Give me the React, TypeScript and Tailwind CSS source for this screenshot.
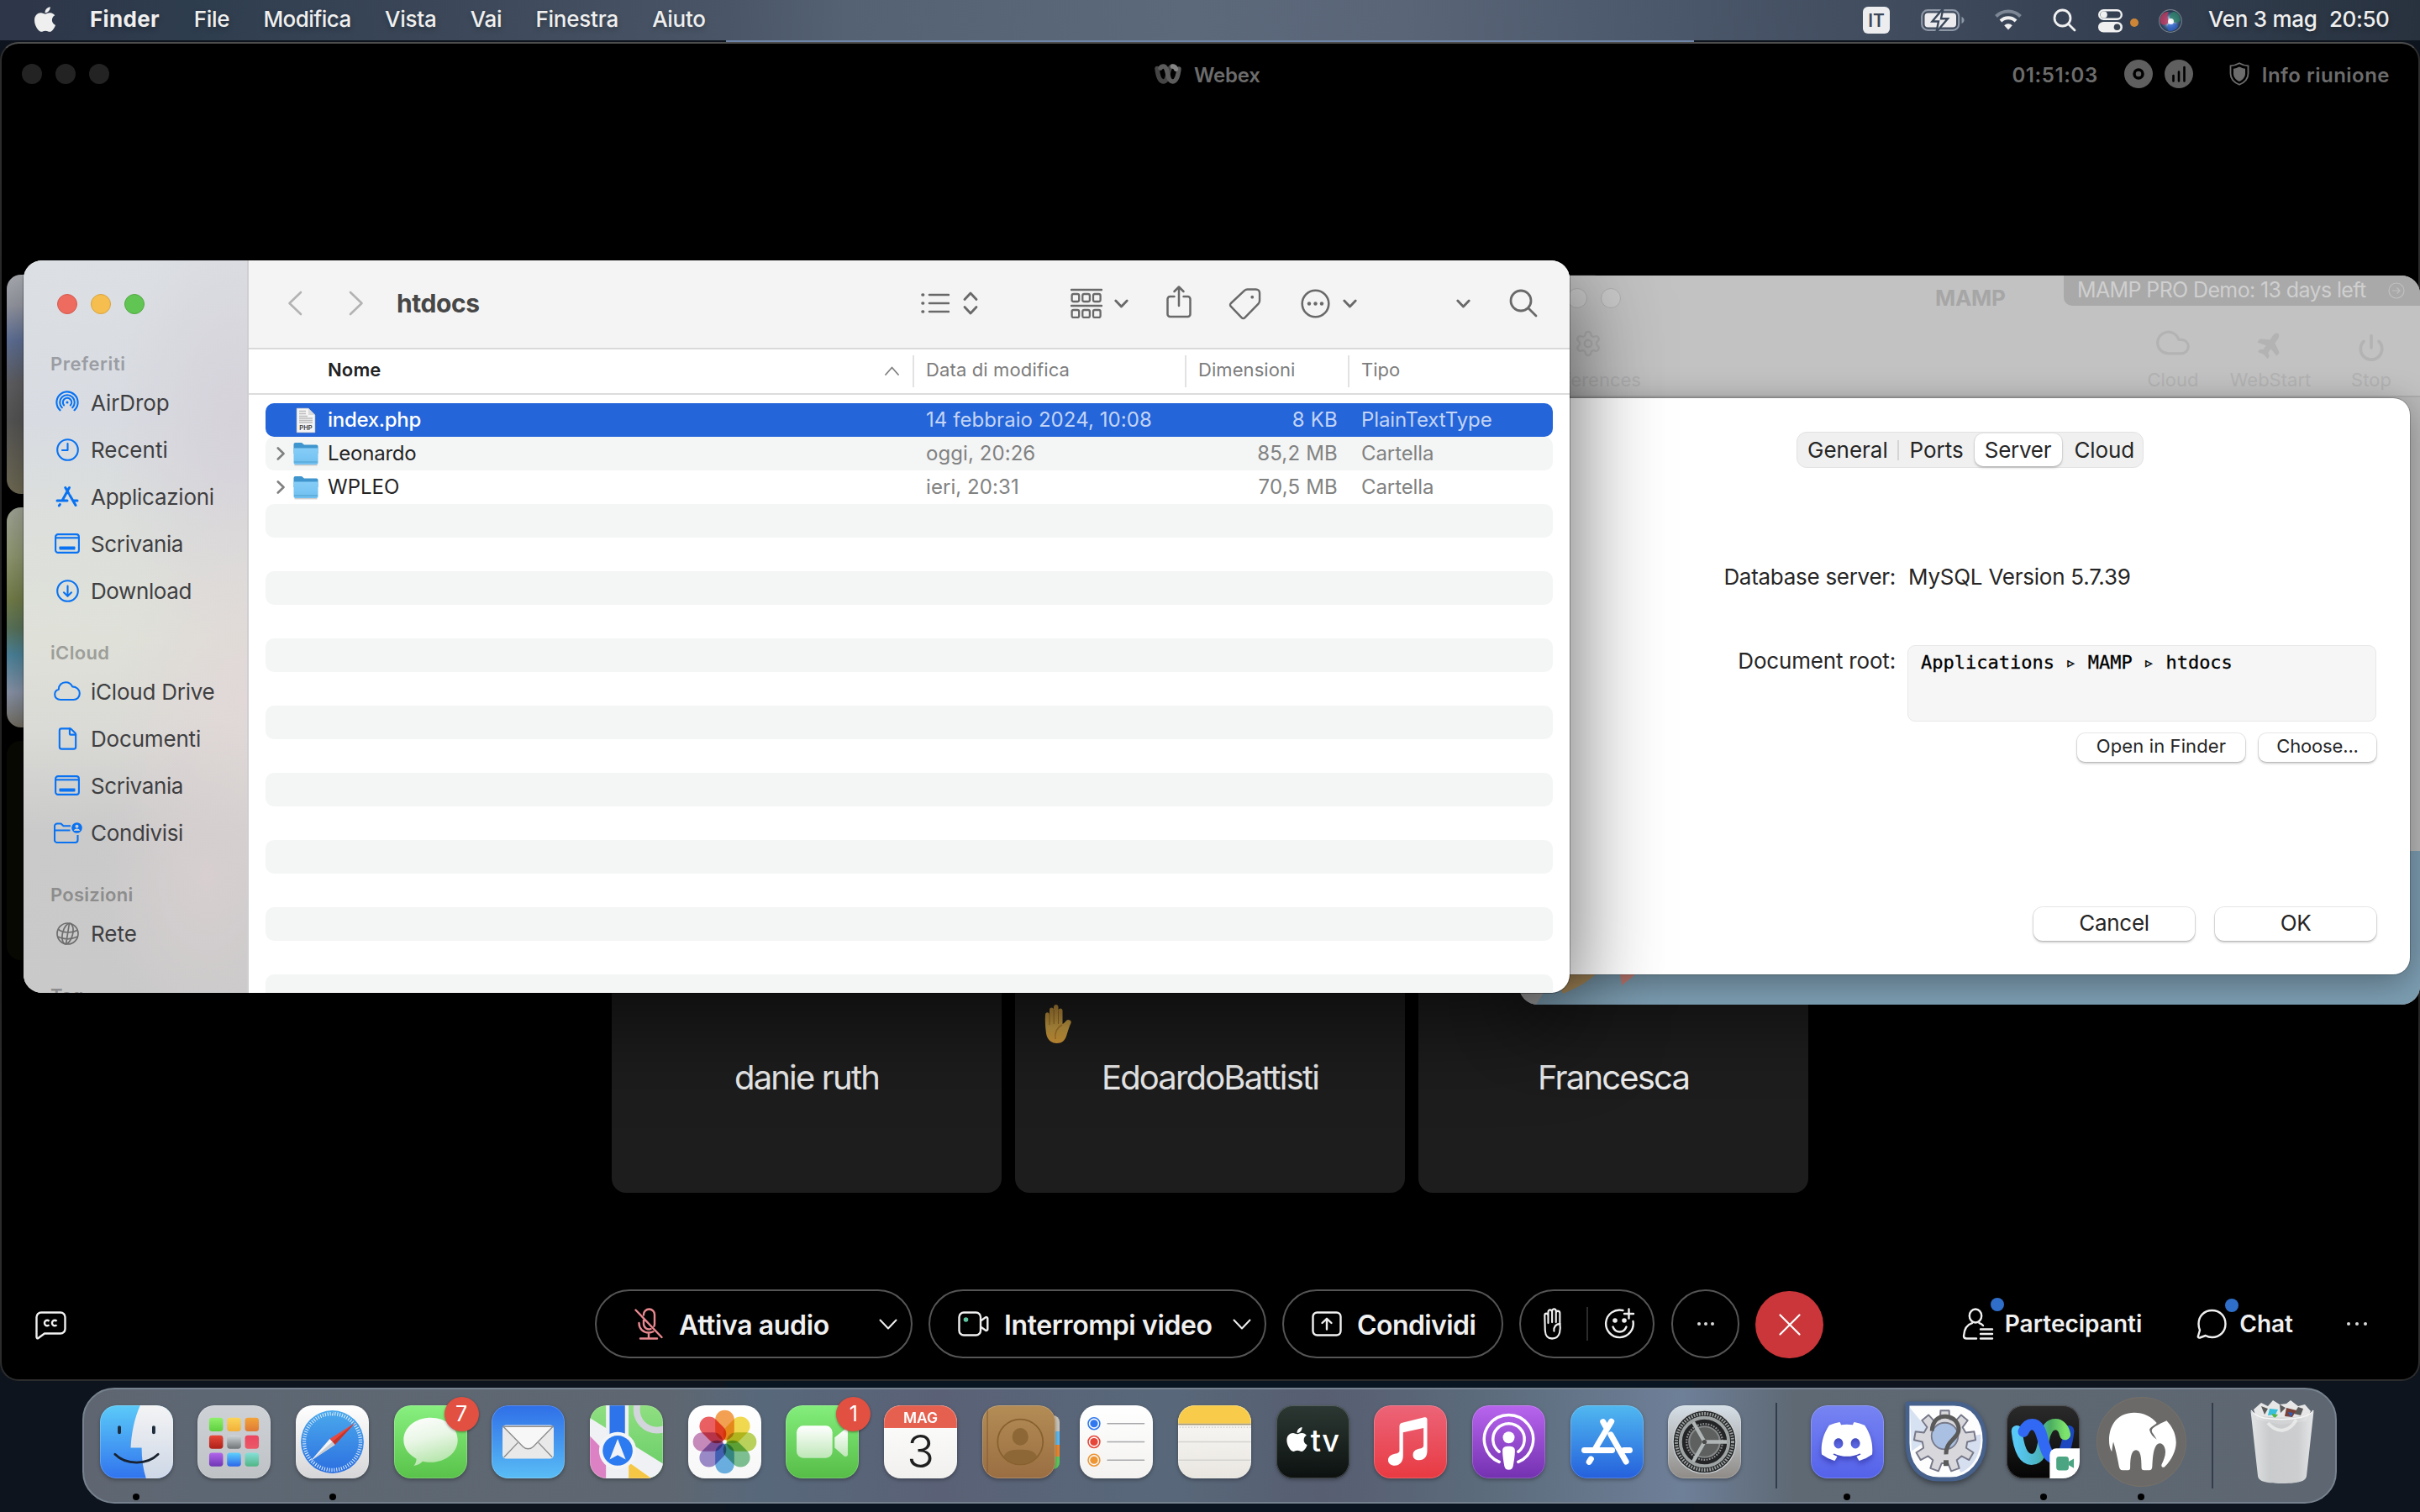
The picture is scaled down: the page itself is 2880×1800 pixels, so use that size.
import type { ReactNode } from 'react';
import { FaApple, FaDiscord, FaPlane } from 'react-icons/fa6';
import { Cloud, File, Power, Settings } from 'lucide-react';

/* ---------- helpers ---------- */

function gearPath(cx: number, cy: number, teeth: number, outer: number, inner: number) {
  const pts: string[] = [];
  const step = (Math.PI * 2) / teeth;
  for (let i = 0; i < teeth; i++) {
    const a = i * step - Math.PI / 2;
    const at = (r: number, o: number) =>
      `${(cx + r * Math.cos(a + o * step)).toFixed(2)} ${(cy + r * Math.sin(a + o * step)).toFixed(2)}`;
    pts.push(at(inner, -0.3), at(outer, -0.2), at(outer, 0.2), at(inner, 0.3));
  }
  return `M${pts.join('L')}Z`;
}

/* ---------- menu bar ---------- */

const menus: [string, string][] = [
  ['File', 'w-[41px] tracking-[-0.012em]'],
  ['Modifica', 'w-[103px] tracking-[-0.02em]'],
  ['Vista', 'w-[60px] tracking-[-0.01em]'],
  ['Vai', 'w-[36px] tracking-[-0.011em]'],
  ['Finestra', 'w-[97px] tracking-[-0.009em]'],
  ['Aiuto', 'w-[62px] tracking-[-0.012em]'],
];

function MenuBar() {
  return (
    <header className="flex h-[48px] w-full items-center bg-[linear-gradient(90deg,#2e3649_0%,#2e3d4e_8%,#3a4657_17%,#4a5667_30%,#556274_35%,#5c697b_49%,#5a6578_58%,#4d596c_67%,#414d5f_78%,#333f51_88%,#28323f_100%)] pb-[3px] pl-[39px] pr-[37px] text-[26px] font-medium leading-none whitespace-nowrap text-[#efefef] [text-shadow:0_3px_6px_rgba(0,0,0,0.3)]">
      <FaApple className="mr-[39px] h-[34px] w-[29px]" />
      <div className="flex gap-[41.7px]">
        <span className="w-[82px] font-bold tracking-[0.012em]">Finder</span>
        {menus.map(([m, c]) => (
          <span key={m} className={c}>{m}</span>
        ))}
      </div>
      <div className="ml-auto flex items-center">
        <span className="mt-[3px] flex h-[32px] w-[32px] items-center justify-center rounded-[6px] bg-[#ededf0] text-[21px] font-semibold text-[#3c4757] [text-shadow:none]">IT</span>
        <svg className="ml-[37px] mt-[3px] h-[26px] w-[52px]" viewBox="0 0 52 26" fill="none">
          <rect x="1.2" y="1.2" width="44" height="23.6" rx="7" stroke="#8d97a5" strokeWidth="2.2" />
          <rect x="4.5" y="4.5" width="37.5" height="17" rx="4" fill="#ececee" />
          <path d="M48.500 9v8c2-.8 3-2.300 3-4s-1-3.200-3-4z" fill="#8d97a5" />
          <path d="M26.500-1 13.500 14.500h7.500L18.500 27 32 11.300h-8z" fill="#ececee" stroke="#3b4859" strokeWidth="2.400" />
        </svg>
        <svg className="ml-[35px] h-[26px] w-[34px]" viewBox="0 0 34 26" fill="none" strokeWidth="4">
          <path d="M2.500 9.500a20.500 20.500 0 0 1 29 0" stroke="#7c8694" />
          <path d="M8 15a12.800 12.800 0 0 1 18 0" stroke="#f0f0f0" />
          <path d="M17 25.500l-4.800-5.200a6.800 6.800 0 0 1 9.600 0z" fill="#f0f0f0" />
        </svg>
        <svg className="ml-[36px] mt-[3px] h-[28px] w-[28px]" viewBox="0 0 28 28" fill="none" stroke="#f0f0f0" strokeWidth="2.800" strokeLinecap="round">
          <circle cx="11.500" cy="11.500" r="9.500" />
          <path d="M18.500 18.500 26 26" />
        </svg>
        <svg className="ml-[26px] mt-[4px] h-[28px] w-[29px]" viewBox="0 0 29 28" fill="none">
          <rect x="1.200" y="1.200" width="26.600" height="10.600" rx="5.300" stroke="#f0f0f0" strokeWidth="2.400" />
          <circle cx="6.800" cy="6.500" r="4" fill="#f0f0f0" />
          <rect x="0" y="15" width="29" height="12.500" rx="6.250" fill="#f0f0f0" />
          <circle cx="22.500" cy="21.300" r="3.800" fill="#36424f" />
        </svg>
        <span className="ml-[9px] mt-[8px] h-[10px] w-[10px] rounded-full bg-[#cf8536]" />
        <svg className="ml-[24px] mt-[4px] h-[28px] w-[28px]" viewBox="0 0 28 28">
          <defs>
            <radialGradient id="siri" cx="0.5" cy="0.52" r="0.5">
              <stop offset="0" stopColor="#ffffff" />
              <stop offset="0.22" stopColor="#b9d3ea" />
              <stop offset="0.6" stopColor="#46678f" />
              <stop offset="1" stopColor="#1c2c3f" />
            </radialGradient>
          </defs>
          <circle cx="14" cy="14" r="13.300" fill="url(#siri)" stroke="#77808c" strokeWidth="1.200" />
          <path d="M2.500 17C0 9 5 3 12 3c-3 5-1 9 1 11-3 5-7 6-10.500 3z" fill="#b93a5e" opacity=".85" />
          <path d="M14 13C12 8 14 3 19 3c5 2 7 7 6.500 11-4 3-8 2-11.500-1z" fill="#2f7f68" opacity=".85" />
          <path d="M13 16c4-1 8 1 10 4-2 4-6 6-11 6-3-3-2-7 1-10z" fill="#2f63d0" opacity=".7" />
          <circle cx="14.500" cy="14.500" r="3.500" fill="#fff" opacity=".9" />
        </svg>
        <span className="ml-[31px] w-[130px] tracking-[-0.011em]">Ven 3 mag</span>
        <span className="ml-[14px] w-[71px] tracking-[-0.016em]">20:50</span>
      </div>
    </header>
  );
}

/* ---------- Webex ---------- */

function WebexGlyph() {
  return (
    <svg className="h-[24px] w-[32px]" viewBox="0 0 32 24" fill="none" strokeLinecap="round" strokeWidth="5.500">
      <path d="M3 5.500C4 15 6 21 10.500 21S15.500 14 16.500 10 19 3 21.500 3" stroke="#454545" />
      <path d="M7 5C8 3.500 9 3 10.500 3 14 3 15 9 16 13.500S19 21 21.500 21C26 21 28 15 29 6" stroke="#5c5c5c" />
      <path d="M21.500 3c2 0 3.300 1.200 4 3.200" stroke="#858585" />
    </svg>
  );
}

function Tile({ name, className = 'bg-[#1d1d1d]', hand }: { name?: string; className?: string; hand?: boolean }) {
  return (
    <div className={`relative flex h-[261.250px] w-[464px] items-center justify-center rounded-[17px] pb-[12px] text-[40px] leading-none text-[#ececec] tracking-[-0.046em] ${className}`}>
      {name}
      {hand && (
        <svg className="absolute left-[34px] top-[37px] h-[47px] w-[36px]" viewBox="0 0 36 47">
          <defs>
            <linearGradient id="palm" x1="0" y1="0" x2="0" y2="1">
              <stop offset="0" stopColor="#b98a3a" />
              <stop offset=".6" stopColor="#d1a647" />
              <stop offset="1" stopColor="#d99c38" />
            </linearGradient>
          </defs>
          <path d="M2 12c0-3 4-4 5 0l0 10V6c0-3.500 5-3.500 5 0V3c0-4 5.500-4 5.500 0v4c0-3.500 5-3.500 5 0v16c3-1 4-5 6.500-5s4.500 1.500 3.500 4c-2 4-3 8-5 14-2 7-6 10-12 10S4 42 3 34 1.500 20 2 12z" fill="url(#palm)" />
          <path d="M7 10v14M12.200 6v17M17.600 7v16" stroke="#946a2a" strokeWidth="1" />
          <path d="M22 24c-6 3-9 9-8 17" stroke="#b17c2d" strokeWidth="1.500" fill="none" />
        </svg>
      )}
    </div>
  );
}

const hiddenTile = 'bg-[#1d1d1d]';
const leftTiles = [
  'bg-[linear-gradient(180deg,#b4b7bd_0%,#a7a9b4_14%,#7186b4_30%,#767578_50%,#6a6a6a_66%,#8a8468_100%)]',
  'bg-[linear-gradient(180deg,#c7cdbb_0%,#b3bd8d_22%,#8f9c5a_42%,#6f8f70_55%,#5da3c0_67%,#a9b6cf_84%,#8e8878_100%)]',
  'bg-[#0b0b05]',
];

function Chevron() {
  return (
    <svg className="h-[13px] w-[22px]" viewBox="0 0 22 13" fill="none" stroke="#f0f0f0" strokeWidth="2" strokeLinecap="round" strokeLinejoin="round">
      <path d="M1.500 1.500 11 11.500l9.500-10" />
    </svg>
  );
}

function Dots({ className }: { className: string }) {
  return (
    <span className={`flex ${className}`}>
      <i className="h-[4px] w-[4px] rounded-full bg-[#d8d8d8]" />
      <i className="h-[4px] w-[4px] rounded-full bg-[#d8d8d8]" />
      <i className="h-[4px] w-[4px] rounded-full bg-[#d8d8d8]" />
    </span>
  );
}

const pill = 'flex h-[82px] items-center rounded-full border-2 border-[#555] shrink-0';

function WebexWindow() {
  return (
    <section className="absolute left-0 top-[50px] flex h-[1594px] w-[2880px] flex-col overflow-hidden rounded-[22px] border-2 border-[#2c2c2c] border-t-[#4d4d4d] bg-black">
      <div className="flex h-[72px] shrink-0 items-center px-[24px] text-[24px] font-semibold leading-none text-[#6c6c6c]">
        <div className="flex w-[1348px] gap-[16px]">
          <i className="h-[24px] w-[24px] rounded-full bg-[#232323]" />
          <i className="h-[24px] w-[24px] rounded-full bg-[#232323]" />
          <i className="h-[24px] w-[24px] rounded-full bg-[#232323]" />
        </div>
        <WebexGlyph />
        <span className="ml-[15px] mt-[4px] tracking-[-0.01em]">Webex</span>
        <div className="ml-auto mr-[10px] flex items-center">
          <span className="mt-[4px] tracking-[0.025em]">01:51:03</span>
          <svg className="ml-[31px] h-[34px] w-[34px]" viewBox="0 0 34 34">
            <circle cx="17" cy="17" r="17" fill="#5f5f5f" />
            <circle cx="17" cy="17" r="5" fill="none" stroke="#000" strokeWidth="3.500" />
          </svg>
          <svg className="ml-[14px] h-[34px] w-[34px]" viewBox="0 0 34 34">
            <circle cx="17" cy="17" r="17" fill="#5f5f5f" />
            <path d="M10.500 19v6.500M17 14.500v11M23.500 9v16.500" stroke="#000" strokeWidth="2.600" strokeLinecap="round" />
          </svg>
          <svg className="ml-[43px] h-[28px] w-[24px]" viewBox="0 0 24 28">
            <path d="M12 1.200c3.500 2 6.500 2.800 10.500 3.200v9c0 6-4 10.500-10.500 13.400C5.500 23.900 1.500 19.400 1.500 13.400v-9C5.500 4 8.500 3.200 12 1.200z" fill="none" stroke="#6c6c6c" strokeWidth="1.800" />
            <path d="M12 5.500c2.500 1.300 4.500 1.900 7 2.200v6c0 4-2.600 7-7 9.300-4.400-2.300-7-5.300-7-9.300v-6c2.500-.3 4.500-.9 7-2.200z" fill="#6c6c6c" />
          </svg>
          <span className="ml-[15px] mt-[4px] tracking-[0.02em]">Info riunione</span>
        </div>
      </div>

      <div className="mt-[203px] flex shrink-0 flex-col gap-[16px]">
        {leftTiles.map((bg) => (
          <div key={bg} className="flex gap-[16px] pl-[6px]">
            <Tile className={bg} />
            <Tile className={hiddenTile} />
            <Tile className={hiddenTile} />
            <Tile className={hiddenTile} />
          </div>
        ))}
        <div className="flex justify-center gap-[16px]">
          <Tile name="danie ruth" />
          <Tile name="EdoardoBattisti" hand />
          <Tile name="Francesca" />
        </div>
      </div>

      <div className="mt-[115px] grid shrink-0 grid-cols-[1fr_auto_1fr] items-center leading-none text-[#f0f0f0]">
        <svg className="ml-[39px] mt-[3px] h-[34px] w-[39px]" viewBox="0 0 39 34" fill="none" stroke="#f0f0f0" strokeWidth="2.400">
          <path d="M8 1.500h23a5.500 5.500 0 0 1 5.500 5.500v14a5.500 5.500 0 0 1-5.500 5.500H12l-7.500 5.500c-1 .7-2 0-2-1.200V7A5.500 5.500 0 0 1 8 1.500z" strokeLinejoin="round" />
          <path d="M17.500 11.800a3.200 3.200 0 1 0 0 4.400M26.500 11.800a3.200 3.200 0 1 0 0 4.400" />
        </svg>

        <div className="mr-[2px] flex items-center gap-[19px] text-[32px] font-semibold whitespace-nowrap">
          <div className={`${pill} w-[378px] pl-[45px] pr-[16px]`}>
            <svg className="h-[38px] w-[34px] shrink-0" viewBox="0 0 34 38" fill="none" stroke="#e9888f" strokeWidth="2.400" strokeLinecap="round">
              <path d="M1.500 2.500 32.500 35M11 8.500V8a6.500 6.500 0 0 1 13 0v11c0 1-.2 2-.6 2.800M11 14v5a6.500 6.500 0 0 0 8.500 6.200M5.500 18c0 7 5 11.500 11.500 11.500 2 0 3.800-.4 5.300-1.200M17 29.500V36M7 36.500h20" />
            </svg>
            <span className="ml-[19px] mt-[3px] tracking-[-0.0115em]">Attiva audio</span>
            <span className="ml-auto"><Chevron /></span>
          </div>
          <div className={`${pill} w-[402px] pl-[33px] pr-[16px]`}>
            <svg className="h-[30px] w-[37px] shrink-0" viewBox="0 0 37 30" fill="none" stroke="#f0f0f0" strokeWidth="2.400" strokeLinejoin="round">
              <rect x="1.500" y="1.500" width="25.500" height="27" rx="5.500" />
              <path d="M27 11.500l6-4.200c1-.7 2.300 0 2.300 1.300v12.800c0 1.300-1.300 2-2.300 1.300l-6-4.200" />
              <circle cx="9.500" cy="10" r="2.800" fill="#5fc6a2" stroke="none" />
            </svg>
            <span className="ml-[18px] mt-[3px] tracking-[-0.0115em]">Interrompi video</span>
            <span className="ml-auto"><Chevron /></span>
          </div>
          <div className={`${pill} w-[263px] pl-[33px]`}>
            <svg className="h-[30px] w-[36px]" viewBox="0 0 36 30" fill="none" stroke="#f0f0f0" strokeWidth="2.400" strokeLinecap="round" strokeLinejoin="round">
              <rect x="1.500" y="1.500" width="33" height="27" rx="5" />
              <path d="M18 21.500v-12M12.500 14 18 8.800l5.500 5.200" />
            </svg>
            <span className="ml-[18px] mt-[3px] tracking-[-0.018em]">Condividi</span>
          </div>
          <div className={`${pill} w-[161px] pl-[26px]`}>
            <svg className="h-[38px] w-[25px]" viewBox="0 0 27 38" fill="none" stroke="#f0f0f0" strokeWidth="2.300" strokeLinecap="round" strokeLinejoin="round" preserveAspectRatio="none">
              <path d="M2.500 9c0-3 4-3 4.500 0v9V5c0-3.500 4.800-3.500 5 0v12V4c0-3.500 5-3.500 5 0v13-11c0-3 4.500-3 5 0v12c1 6 1.500 18.500-10 18.500-7 0-8.500-4-9-9.500z" />
              <path d="M22 19c-5 0-8 3.500-7.500 8.500" />
            </svg>
            <i className="ml-[27px] h-[40px] w-[2px] bg-[#2b2b2b]" />
            <svg className="ml-[19px] h-[38px] w-[38px]" viewBox="0 0 38 38" fill="none" stroke="#f0f0f0" strokeWidth="2.400" strokeLinecap="round">
              <path d="M22.500 3A16.300 16.300 0 1 0 34.500 16M29.500 1.500v11M24 7h11" />
              <path d="M10.500 22.500c1.500 4 4.600 6 8 6s6.500-2 8-6" />
              <circle cx="13" cy="15" r="1.600" fill="#f0f0f0" />
              <circle cx="24" cy="15" r="1.600" fill="#f0f0f0" />
            </svg>
          </div>
          <div className={`${pill} ml-[1px] w-[81px] justify-center`}><Dots className="gap-[4px]" /></div>
          <div className="mt-[1px] flex h-[80px] w-[81px] items-center justify-center rounded-full bg-[#ca3639]">
            <svg className="h-[26px] w-[26px]" viewBox="0 0 26 26" stroke="#fff" strokeWidth="2.200" strokeLinecap="round">
              <path d="M1.500 1.500l23 23M24.500 1.500l-23 23" />
            </svg>
          </div>
        </div>

        <div className="flex items-center justify-end pr-[61px] text-[28px] font-semibold">
          <span className="relative mr-[13px]">
            <svg className="h-[38px] w-[38px]" viewBox="0 0 38 38" fill="none" stroke="#f0f0f0" strokeWidth="2.400" strokeLinecap="round">
              <ellipse cx="16" cy="9.500" rx="7.200" ry="8" />
              <path d="M17 36.500H5.500c-2.500 0-3.500-1.200-3.500-3 .5-7.500 4-13.500 10-15.300M20.500 18.200c1.800.6 3.300 1.500 4.500 2.800M22 25.500h14M22 31h14M22 36.500h14" />
            </svg>
            <i className="absolute left-[34px] top-[-12px] h-[16px] w-[16px] rounded-full bg-[#2f6fca]" />
          </span>
          <span>Partecipanti</span>
          <span className="relative ml-[65px] mr-[15px]">
            <svg className="h-[36px] w-[36px]" viewBox="0 0 36 36" fill="none" stroke="#f0f0f0" strokeWidth="2.400" strokeLinejoin="round">
              <path d="M18.500 2C28 2 34.500 9 34.500 18S28 34 18.500 34c-3 0-5.500-.7-7.700-2L4 34.500c-1.500.5-2.500-.5-2-2l2-7C3 23.300 2.500 21 2.500 18 2.500 9 9 2 18.500 2z" />
            </svg>
            <i className="absolute left-[34px] top-[-12px] h-[16px] w-[16px] rounded-full bg-[#2f6fca]" />
          </span>
          <span>Chat</span>
          <Dots className="ml-[64px] gap-[6px]" />
        </div>
      </div>
    </section>
  );
}

/* ---------- MAMP ---------- */

function PushButton({ children, className }: { children: ReactNode; className: string }) {
  return (
    <button className={`flex items-center justify-center bg-white leading-none text-[#262626] shadow-[0_0_0_1px_rgba(0,0,0,0.09),0_2px_3px_rgba(0,0,0,0.22)] ${className}`}>
      {children}
    </button>
  );
}

function MampWindow() {
  return (
    <section className="absolute left-[1808px] top-[328px] h-[868px] w-[1072px] overflow-hidden rounded-[22px] bg-[#c2c2c2] shadow-[0_24px_80px_rgba(0,0,0,0.45)]">
      <div className="h-[145px] border-b-2 border-[#adadad] text-[#b3b3b3]">
        <div className="flex gap-[16px] pl-[17px] pt-[15px]">
          <i className="h-[24px] w-[24px] rounded-full border border-[#b0b0b0] bg-[#cbcbcb]" />
          <i className="h-[24px] w-[24px] rounded-full border border-[#b0b0b0] bg-[#cbcbcb]" />
          <i className="h-[24px] w-[24px] rounded-full border border-[#b0b0b0] bg-[#cbcbcb]" />
          <span className="ml-[358px] text-[26px] font-bold leading-[23px] tracking-[-0.012em] text-[#a6a6a6]">MAMP</span>
        </div>
        <div className="flex pt-[25px] text-[22px] leading-none">
          <div className="ml-[19px] flex w-[126px] flex-col items-center">
            <Settings className="h-[34px] w-[34px]" strokeWidth={1.6} />
            <span className="mt-[15px]">Preferences</span>
          </div>
          <div className="ml-auto mr-[28px] flex">
            <div className="flex w-[72px] flex-col items-center">
              <Cloud className="mt-[-6px] h-[44px] w-[44px]" strokeWidth={1.7} />
              <span className="mt-[11px]">Cloud</span>
            </div>
            <div className="ml-[24px] flex w-[112px] flex-col items-center">
              <FaPlane className="mt-[2px] h-[32px] w-[32px] -rotate-[55deg]" />
              <span className="mt-[15px]">WebStart</span>
            </div>
            <div className="ml-[34px] flex w-[60px] flex-col items-center">
              <Power className="mt-[5px] h-[34px] w-[34px]" strokeWidth={2.6} />
              <span className="mt-[10px]">Stop</span>
            </div>
          </div>
        </div>
      </div>
      <div className="absolute right-0 top-0 flex h-[36px] w-[424px] items-center rounded-bl-[10px] bg-[#a9a9a9] pb-[1px] pl-[16px] text-[25px] leading-none text-[#cfcfcf]">
        <span className="w-[345px] tracking-[-0.025em] whitespace-nowrap">MAMP PRO Demo: 13 days left</span>
        <svg className="ml-[25px] h-[20px] w-[20px]" viewBox="0 0 20 20" fill="none" stroke="#c0c0c0" strokeWidth="1.200">
          <circle cx="10" cy="10" r="9" />
          <path d="M5 10h9M10.500 6.500 14 10l-3.500 3.500" />
        </svg>
      </div>

      <div className="h-[540px] bg-[#b9b9b9]" />
      <div className="h-[183px] bg-[#7c9db1]">
        <svg className="h-[183px] w-[160px]" viewBox="0 0 160 183">
          <path d="M0 120h60L20 183H0z" fill="#a3a3a3" />
          <path d="M30 120h78c-8 22-22 36-56 50z" fill="#b3925f" />
          <path d="M116 120h42c-8 18-20 28-36 40z" fill="#c87f76" />
        </svg>
      </div>

      <div className="absolute left-[12px] top-[146px] flex h-[686px] w-[1048px] flex-col rounded-[20px] rounded-tl-none bg-white pt-[40px] text-[26px] leading-none text-[#262626] shadow-[0_8px_40px_rgba(0,0,0,0.35),0_0_0_1px_rgba(0,0,0,0.2)]">
        <div className="ml-[1px] flex h-[43px] w-[413px] shrink-0 items-center self-center rounded-[12px] border border-[#e2e2e2] bg-[#f0f0f0]">
          <span className="ml-[12px] w-[107px]">General</span>
          <i className="h-[24px] w-[1.5px] bg-[#d5d5d5]" />
          <span className="ml-[13px] w-[77px]">Ports</span>
          <span className="flex h-[39px] w-[104px] items-center justify-center rounded-[10px] bg-white tracking-[-0.01em] shadow-[0_0_0_1px_rgba(0,0,0,0.05),0_2px_3px_rgba(0,0,0,0.2)]">Server</span>
          <span className="ml-[15px] tracking-[-0.005em]">Cloud</span>
        </div>
        <div className="mt-[114px] flex h-[32px] items-center gap-[15px]">
          <span className="w-[436px] text-right tracking-[-0.011em]">Database server:</span>
          <span className="tracking-[-0.009em]">MySQL Version 5.7.39</span>
        </div>
        <div className="mt-[65px] flex gap-[14px]">
          <span className="w-[436px] text-right leading-[38px] tracking-[-0.007em]">Document root:</span>
          <div className="h-[91px] w-[558px] rounded-[9px] border border-[#e8e8e8] bg-[#f6f6f6] pl-[15px] font-['DejaVu_Sans_Mono',monospace] text-[22px] leading-[40px] whitespace-pre text-black [-webkit-text-stroke:0.3px_black]">
            Applications ▹ MAMP ▹ htdocs
          </div>
        </div>
        <div className="mt-[14px] flex justify-end gap-[16px] pr-[40px] text-[22px]">
          <PushButton className="h-[34px] w-[200px] rounded-[9px] pb-[4px] tracking-[0.005em]">Open in Finder</PushButton>
          <PushButton className="h-[34px] w-[140px] rounded-[9px] pb-[4px] tracking-[-0.007em]">Choose...</PushButton>
        </div>
        <div className="mt-[173px] flex justify-end gap-[24px] pr-[40px]">
          <PushButton className="h-[40px] w-[192px] rounded-[11px] pb-[3px] tracking-[-0.011em]">Cancel</PushButton>
          <PushButton className="h-[40px] w-[192px] rounded-[11px] pb-[3px] tracking-[-0.017em]">OK</PushButton>
        </div>
      </div>
    </section>
  );
}

/* ---------- Finder ---------- */

const blue = '#0872f2';

const AirDropIcon = (
  <svg className="h-[28px] w-[28px]" viewBox="0 0 28 28" fill="none" stroke={blue} strokeWidth="2.100" strokeLinecap="round">
    <circle cx="14" cy="14" r="12.600" pathLength="360" strokeDasharray="276 84" transform="rotate(132 14 14)" />
    <circle cx="14" cy="14" r="8.800" pathLength="360" strokeDasharray="270 90" transform="rotate(135 14 14)" />
    <circle cx="14" cy="14" r="5.200" pathLength="360" strokeDasharray="264 96" transform="rotate(138 14 14)" />
    <circle cx="14" cy="14" r="1.600" fill={blue} stroke="none" />
  </svg>
);
const ClockIcon = (
  <svg className="h-[27px] w-[27px]" viewBox="0 0 27 27" fill="none" stroke={blue} strokeWidth="2.100" strokeLinecap="round" strokeLinejoin="round">
    <circle cx="13.500" cy="13.500" r="12.300" />
    <path d="M13.500 6v8H7" />
  </svg>
);
const AppsIcon = (
  <svg className="h-[26px] w-[28px]" viewBox="0 0 28 26" fill="none" stroke={blue} strokeWidth="3" strokeLinecap="round">
    <path d="M2 18h12M21 18h5M16.500 2.500 8 18M11.800 2.500l4 7M17 11.500l7 12M5.300 22.500 4.300 24" />
  </svg>
);
const DesktopIcon = (
  <svg className="h-[24px] w-[30px]" viewBox="0 0 30 24" fill="none" stroke={blue} strokeWidth="2.100">
    <rect x="1.100" y="1.100" width="27.800" height="21.800" rx="3" />
    <path d="M1 5.300h28" />
    <rect x="5.500" y="15.500" width="19" height="4" rx=".8" fill={blue} stroke="none" />
  </svg>
);
const DownloadIcon = (
  <svg className="h-[27px] w-[27px]" viewBox="0 0 27 27" fill="none" stroke={blue} strokeWidth="2.100" strokeLinecap="round" strokeLinejoin="round">
    <circle cx="13.500" cy="13.500" r="12.300" />
    <path d="M13.500 7.500v12M9 15.300l4.500 4.500 4.500-4.500" />
  </svg>
);
const CloudIcon = (
  <svg className="h-[24px] w-[32px]" viewBox="0 0 32 24" fill="none" stroke={blue} strokeWidth="2.100" strokeLinejoin="round">
    <path d="M8 22c-4 0-6.800-2.600-6.800-6.300 0-3 1.900-5.300 4.600-6C5.900 4.800 9.500 1.200 14.200 1.200c3.500 0 6.500 2 7.900 5.200C27 6.500 30.800 10 30.800 14.500S27.500 22 23.500 22z" />
  </svg>
);
const DocIcon = <File className="h-[29px] w-[29px]" stroke={blue} strokeWidth={1.75} />;
const SharedIcon = (
  <svg className="ml-[2px] h-[25px] w-[34px]" viewBox="0 0 34 25" fill="none" stroke={blue} strokeWidth="2.100" strokeLinejoin="round">
    <path d="M28.500 15v6a3 3 0 0 1-3 3H4a3 3 0 0 1-3-3V4.500a3 3 0 0 1 3-3h4.500l3 2.800H20M1 9.500h18.500" />
    <circle cx="27.500" cy="6.500" r="6.300" fill={blue} stroke="none" />
    <circle cx="27.500" cy="4.800" r="2" fill="#cfcfcf" stroke="none" />
    <path d="M23.800 10c.8-2 2-2.600 3.700-2.600s2.900.6 3.700 2.600z" fill="#cfcfcf" stroke="none" />
  </svg>
);
const NetIcon = (
  <svg className="h-[27px] w-[27px]" viewBox="0 0 27 27" fill="none" stroke="#6e6e6e" strokeWidth="1.700">
    <circle cx="13.500" cy="13.500" r="12.500" />
    <ellipse cx="13.500" cy="13.500" rx="6" ry="12.500" transform="rotate(14 13.500 13.500)" />
    <path d="M2.500 8.500c6 4.500 16 4.500 22.500 1M1.500 17c7 3.500 16 3.500 24 0M15.500 1.200 11.500 26" />
  </svg>
);

type Item = [string, ReactNode, string];
const sidebar: { title: string; cls: string; items: Item[] }[] = [
  { title: 'Preferiti', cls: 'text-[#9b9da3] tracking-[0.024em]', items: [
    ['AirDrop', AirDropIcon, 'tracking-[-0.004em]'],
    ['Recenti', ClockIcon, ''],
    ['Applicazioni', AppsIcon, 'tracking-[-0.01em]'],
    ['Scrivania', DesktopIcon, 'tracking-[-0.014em]'],
    ['Download', DownloadIcon, 'tracking-[-0.015em]'],
  ] },
  { title: 'iCloud', cls: 'text-[#9d9e99] tracking-[0.016em]', items: [
    ['iCloud Drive', CloudIcon, 'tracking-[-0.009em]'],
    ['Documenti', DocIcon, 'tracking-[-0.007em]'],
    ['Scrivania', DesktopIcon, 'tracking-[-0.014em]'],
    ['Condivisi', SharedIcon, 'tracking-[-0.013em]'],
  ] },
  { title: 'Posizioni', cls: 'text-[#8d8d8d] tracking-[0.012em]', items: [['Rete', NetIcon, '']] },
  { title: 'Tag', cls: 'text-[#8d8d8d]', items: [] },
];

function Sidebar() {
  return (
    <aside className="w-[268px] shrink-0 border-r-2 border-[#cfcfd1] bg-[radial-gradient(ellipse_50%_22%_at_82%_84%,#d7cfd0_0%,transparent_100%),radial-gradient(ellipse_60%_30%_at_100%_60%,#e1d8d7_0%,transparent_100%),radial-gradient(ellipse_60%_30%_at_95%_22%,#d6d2da_0%,transparent_100%),linear-gradient(180deg,#dce0e4_0%,#d8dce2_22%,#dcdfdb_36%,#dfe1d9_52%,#dadad6_64%,#cacaca_78%,#c9c9c9_100%)]">
      <div className="flex h-[77px] items-end gap-[16px] pb-[13px] pl-[40px]">
        <i className="h-[24px] w-[24px] rounded-full border border-[#d65a50] bg-[#ed6b5f]" />
        <i className="h-[24px] w-[24px] rounded-full border border-[#d9a33f] bg-[#f5be4f]" />
        <i className="h-[24px] w-[24px] rounded-full border border-[#53a844] bg-[#61c554]" />
      </div>
      {sidebar.map((s) => (
        <div key={s.title}>
          <div className={`h-[64px] pl-[32px] pt-[28px] text-[22px] font-semibold leading-[36px] ${s.cls}`}>{s.title}</div>
          {s.items.map(([label, icon, cls], i) => (
            <div key={label + i} className="flex h-[56px] items-center text-[26px] leading-none text-[#3f3f42]">
              <span className="ml-[34px] flex w-[36px] justify-center">{icon}</span>
              <span className={`ml-[10px] mt-[2px] ${cls}`}>{label}</span>
            </div>
          ))}
        </div>
      ))}
    </aside>
  );
}

const g = '#696969';

function DownChevron({ className = '' }: { className?: string }) {
  return (
    <svg className={`h-[11px] w-[17px] ${className}`} viewBox="0 0 17 11" fill="none" stroke={g} strokeWidth="2.800" strokeLinecap="round" strokeLinejoin="round">
      <path d="M1.800 2 8.500 9l6.700-7" />
    </svg>
  );
}

function Toolbar() {
  return (
    <div className="flex h-[106px] items-center border-b-2 border-[#d9d9d9] bg-[#f4f4f4] pb-[2px] pl-[46px] pr-[38px]">
      <svg className="h-[30px] w-[18px]" viewBox="0 0 18 30" fill="none" stroke="#b3b3b3" strokeWidth="2.600" strokeLinecap="round" strokeLinejoin="round"><path d="M16 2 2.500 15 16 28" /></svg>
      <svg className="ml-[55px] h-[30px] w-[18px]" viewBox="0 0 18 30" fill="none" stroke="#b3b3b3" strokeWidth="2.600" strokeLinecap="round" strokeLinejoin="round"><path d="M2 2l13.500 13L2 28" /></svg>
      <span className="ml-[39px] w-[624px] text-[30px] font-bold leading-none tracking-[-0.0147em] text-[#474747]">htdocs</span>
      <svg className="h-[26px] w-[34px]" viewBox="0 0 34 26" fill="none" stroke={g} strokeWidth="2.600" strokeLinecap="round">
        <path d="M10 3h23M10 13h23M10 23h23" />
        <path d="M2 3h.6M2 13h.6M2 23h.6" strokeWidth="3.600" />
      </svg>
      <svg className="ml-[16px] h-[28px] w-[18px]" viewBox="0 0 18 28" fill="none" stroke={g} strokeWidth="2.800" strokeLinecap="round" strokeLinejoin="round">
        <path d="M2 9.500 9 2l7 7.500M2 18.500 9 26l7-7.500" />
      </svg>
      <svg className="ml-[110px] h-[36px] w-[38px]" viewBox="0 0 38 36" fill="none" stroke={g} strokeWidth="2.300">
        <path d="M1 2h36M1 21h36" strokeWidth="2.600" strokeLinecap="round" />
        {[1.600, 14.300, 27].map((x) => (
          <g key={x}>
            <rect x={x} y="7" width="8.600" height="9" rx="2" />
            <rect x={x} y="26" width="8.600" height="9" rx="2" />
          </g>
        ))}
      </svg>
      <DownChevron className="ml-[14px]" />
      <svg className="mb-[4px] ml-[45px] h-[40px] w-[30px]" viewBox="0 0 30 40" fill="none" stroke={g} strokeWidth="2.500" strokeLinecap="round" strokeLinejoin="round">
        <path d="M9.500 14H4.500A3 3 0 0 0 1.500 17v18a3 3 0 0 0 3 3h21a3 3 0 0 0 3-3V17a3 3 0 0 0-3-3h-5M15 25V3M9.500 8 15 2.500 20.500 8" />
      </svg>
      <svg className="ml-[44px] h-[39px] w-[39px]" viewBox="0 0 39 40" fill="none" stroke={g} strokeWidth="2.500" strokeLinejoin="round">
        <path d="M22.500 2.500h10.500c2.500 0 4.500 2 4.500 4.500v9.500c0 1.500-.6 2.700-1.500 3.600L19.500 37c-1.200 1.300-2.800 1.300-4 0L2.500 23.500c-1.300-1.200-1.200-2.800 0-4L19 4c1-.9 2.100-1.500 3.500-1.500z" />
        <circle cx="28.500" cy="12" r="1.900" fill={g} stroke="none" />
      </svg>
      <svg className="ml-[47px] h-[35px] w-[35px]" viewBox="0 0 35 35" fill="none" stroke={g} strokeWidth="2.600">
        <circle cx="17.500" cy="17.500" r="15.800" />
        <g fill={g} stroke="none"><circle cx="10" cy="17.500" r="2.200" /><circle cx="17.500" cy="17.500" r="2.200" /><circle cx="25" cy="17.500" r="2.200" /></g>
      </svg>
      <DownChevron className="ml-[15px]" />
      <DownChevron className="ml-auto" />
      <svg className="ml-[46px] h-[34px] w-[34px]" viewBox="0 0 34 34" fill="none" stroke={g} strokeWidth="2.800" strokeLinecap="round">
        <circle cx="14" cy="14" r="12" />
        <path d="M23 23l9 9" />
      </svg>
    </div>
  );
}

const FolderIcon = (
  <svg className="h-[29px] w-[30px]" viewBox="0 0 30 29">
    <defs>
      <linearGradient id="fold" x1="0" y1="0" x2="0" y2="1">
        <stop offset="0" stopColor="#86cdf8" />
        <stop offset="1" stopColor="#6fbff0" />
      </linearGradient>
    </defs>
    <path d="M.5 3A2 2 0 0 1 2.500 1H10l3 2.500h14.500a2 2 0 0 1 2 2V14H.5z" fill="#3f95cd" />
    <path d="M.5 7.500h29V25a2 2 0 0 1-2 2h-25a2 2 0 0 1-2-2z" fill="url(#fold)" />
    <path d="M1 24h28" stroke="#4f9ecb" strokeWidth="1" />
    <path d="M1.500 27.800h27" stroke="#b9b9b9" strokeWidth="1" />
  </svg>
);

const PhpIcon = (
  <svg className="h-[31px] w-[24px]" viewBox="0 0 24 31">
    <path d="M1 1h14l8 8v21H1z" fill="#f4f4f4" stroke="#9aa4b8" strokeWidth=".6" />
    <path d="M15 1v8h8z" fill="#dadada" />
    <path d="M4 4.500h8M4 7.500h8M4 10.500h10M4 13h16M4 15.500h16M4 18h16" stroke="#bcbcbc" strokeWidth="1.300" />
    <text x="12" y="27" textAnchor="middle" fontSize="7.500" fontWeight="600" fill="#333" fontFamily="Inter, sans-serif">PHP</text>
  </svg>
);

interface Row { name?: string; nameCls?: string; date?: string; size?: string; kind?: string; folder?: boolean }
const rows: Row[] = [
  { name: 'index.php', nameCls: 'font-medium tracking-[-0.012em]', date: '14 febbraio 2024, 10:08', size: '8 KB', kind: 'PlainTextType' },
  { name: 'Leonardo', nameCls: 'tracking-[-0.01em]', date: 'oggi, 20:26', size: '85,2 MB', kind: 'Cartella', folder: true },
  { name: 'WPLEO', date: 'ieri, 20:31', size: '70,5 MB', kind: 'Cartella', folder: true },
  ...Array.from({ length: 15 }, () => ({})),
];

function FileRow({ row, index }: { row: Row; index: number }) {
  const selected = index === 0;
  const bg = selected ? 'bg-[#2465d9] text-[#c3d4f6]' : index % 2 ? 'bg-[#f4f5f5] text-[#818282]' : 'text-[#818282]';
  return (
    <div className={`mx-[20px] flex h-[40px] shrink-0 items-center rounded-[10px] text-[24px] leading-none whitespace-nowrap ${bg}`}>
      {row.name && (
        <>
          <span className="w-[33px] pl-[13px]">
            {row.folder && (
              <svg className="h-[16px] w-[10px]" viewBox="0 0 10 16" fill="none" stroke="#808080" strokeWidth="2.600" strokeLinecap="round" strokeLinejoin="round"><path d="M1.800 1.500 8.500 8l-6.700 6.500" /></svg>
            )}
          </span>
          <span className="flex w-[30px] justify-center">{row.folder ? FolderIcon : PhpIcon}</span>
          <span className={`ml-[11px] w-[712px] ${selected ? 'text-white' : 'text-[#242424]'} ${row.nameCls ?? ''}`}>{row.name}</span>
          <span className="w-[330px] tracking-[0.003em]">{row.date}</span>
          <span className="w-[160px] text-right tracking-[0.008em]">{row.size}</span>
          <span className="ml-[28px] tracking-[-0.004em]">{row.kind}</span>
        </>
      )}
    </div>
  );
}

function FinderWindow() {
  return (
    <section className="absolute left-[28px] top-[310px] flex h-[872px] w-[1840px] overflow-hidden rounded-[22px] bg-white shadow-[0_30px_110px_rgba(0,0,0,0.62),0_0_0_1px_rgba(0,0,0,0.3)]">
      <Sidebar />
      <div className="flex min-w-0 flex-1 flex-col">
        <Toolbar />
        <div className="flex h-[54px] shrink-0 items-center border-b-2 border-[#dcdcdc] text-[22px] leading-none text-[#7d7d7d]">
          <span className="ml-[94px] w-[663px] pb-[4px] font-semibold tracking-[0.0066em] text-[#222]">Nome</span>
          <svg className="mb-[1px] h-[11px] w-[17px]" viewBox="0 0 17 11" fill="none" stroke="#808080" strokeWidth="1.800" strokeLinecap="round" strokeLinejoin="round"><path d="M1 10 8.500 1.500 16 10" /></svg>
          <i className="ml-[16px] h-[38px] w-[2px] bg-[#e2e2e2]" />
          <span className="ml-[14px] w-[308px] pb-[4px] tracking-[0.006em]">Data di modifica</span>
          <i className="h-[38px] w-[2px] bg-[#e2e2e2]" />
          <span className="ml-[14px] w-[178px] pb-[4px] tracking-[0.003em]">Dimensioni</span>
          <i className="h-[38px] w-[2px] bg-[#e2e2e2]" />
          <span className="ml-[14px] pb-[4px]">Tipo</span>
        </div>
        <div className="mt-[10px] flex min-h-0 flex-1 flex-col overflow-hidden">
          {rows.map((r, i) => <FileRow key={i} row={r} index={i} />)}
        </div>
      </div>
    </section>
  );
}

/* ---------- Dock ---------- */

function AppTile({ id, from, to, children }: { id: string; from: string; to: string; children?: ReactNode }) {
  return (
    <svg className="h-[87px] w-[87px] drop-shadow-[0_2px_2px_rgba(0,0,0,0.3)]" viewBox="0 0 100 100">
      <defs>
        <linearGradient id={`${id}-bg`} x1="0" y1="0" x2="0" y2="1">
          <stop offset="0" stopColor={from} />
          <stop offset="1" stopColor={to} />
        </linearGradient>
        <clipPath id={`${id}-clip`}><rect width="100" height="100" rx="23" /></clipPath>
      </defs>
      <g clipPath={`url(#${id}-clip)`}>
        <rect width="100" height="100" fill={`url(#${id}-bg)`} />
        {children}
        <rect x=".5" y=".5" width="99" height="99" rx="22.500" fill="none" stroke="#fff" strokeOpacity=".25" />
      </g>
    </svg>
  );
}

function Slot({ children, open, badge }: { children: ReactNode; open?: boolean; badge?: string }) {
  return (
    <div className="relative flex h-full w-[116.67px] shrink-0 items-center justify-center pb-[10px]">
      {children}
      {badge && (
        <span className="absolute right-[1px] top-[9px] flex h-[41px] w-[41px] items-center justify-center rounded-full bg-[#e25041] text-[25px] leading-none text-white shadow-[0_1px_3px_rgba(0,0,0,0.4)]">{badge}</span>
      )}
      {open && <i className="absolute bottom-[2px] h-[8px] w-[8px] rounded-full bg-black" />}
    </div>
  );
}

const launchColors: [string, string][] = [
  ['#8ff06a', '#5fd040'], ['#fbd558', '#f2b03a'], ['#f2a43a', '#df7a35'],
  ['#e8483a', '#ad2018'], ['#cfd6da', '#707476'], ['#ec4560', '#ea5a68'],
  ['#b266ea', '#6f35b5'], ['#5cd0fc', '#2c66ea'], ['#85dfd8', '#50b585'],
];

const petals = ['#f3943a', '#f1d636', '#b3cf45', '#6dbb84', '#58a8e2', '#8f7cc4', '#c27cb4', '#ea4a4c'];

function Dock() {
  return (
    <nav className="absolute left-[98px] top-[1652px] flex h-[138px] w-[2683px] items-center rounded-[38px] border-2 border-[#76828f] bg-[linear-gradient(90deg,#5f6671_0%,#5d6773_5%,#5e6771_26%,#58687b_30%,#5a6176_38%,#58687a_48%,#575e71_55%,#5b6b7b_62%,#6e7f98_71%,#5e6974_76%,#5d6671_100%)] pl-[4px]">
      <Slot open>
        <AppTile id="finder" from="#5bcaf8" to="#3174ee">
          <defs>
            <linearGradient id="face" x1="0" y1="0" x2="0" y2="1"><stop offset="0" stopColor="#f4f4f5" /><stop offset="1" stopColor="#cdd7e6" /></linearGradient>
          </defs>
          <path d="M55 0C47 18 43 38 42 58h15c0 15 2 29 6 42h37V0z" fill="url(#face)" />
          <path d="M26.500 30v7M73.500 30v7" stroke="#1d2b3b" strokeWidth="4.500" strokeLinecap="round" />
          <path d="M20.500 67c15 15 44 15 59 0" stroke="#182230" strokeWidth="3.200" fill="none" strokeLinecap="round" />
        </AppTile>
      </Slot>
      <Slot>
        <AppTile id="launch" from="#ced2d7" to="#bfc2c5">
          {launchColors.map(([a, b], i) => (
            <g key={i}>
              <defs><linearGradient id={`lp${i}`} x1="0" y1="0" x2="0" y2="1"><stop offset="0" stopColor={a} /><stop offset="1" stopColor={b} /></linearGradient></defs>
              <rect x={16 + (i % 3) * 24.500} y={17 + Math.floor(i / 3) * 24} width="19" height="18.500" rx="4" fill={`url(#lp${i})`} />
            </g>
          ))}
        </AppTile>
      </Slot>
      <Slot open>
        <AppTile id="safari" from="#ffffff" to="#d6d6d8">
          <defs><linearGradient id="saf" x1="0" y1="0" x2="0" y2="1"><stop offset="0" stopColor="#4aa9ec" /><stop offset="1" stopColor="#2c6fe0" /></linearGradient></defs>
          <circle cx="50" cy="50" r="43" fill="url(#saf)" />
          <circle cx="50" cy="50" r="38.500" fill="none" stroke="#e2f0fc" strokeWidth="5" pathLength="144" strokeDasharray=".7 1.300" />
          <path d="M81 24 46.500 46l7 8z" fill="#e8483f" />
          <path d="M81 24 53.500 54 50 50z" fill="#c3352c" />
          <path d="M20.500 76 46.500 46l7 8z" fill="#f4f4f4" />
          <path d="M20.500 76 53.500 54 50 50z" fill="#c9ccd2" />
        </AppTile>
      </Slot>
      <Slot badge="7">
        <AppTile id="msg" from="#88f07f" to="#59c24a">
          <defs><linearGradient id="bub" x1="0" y1="0" x2=".3" y2="1"><stop offset="0" stopColor="#fff" /><stop offset=".5" stopColor="#e9f6e6" /><stop offset="1" stopColor="#b8e6ae" /></linearGradient></defs>
          <path d="M50 17c21 0 37 13.500 37 30.500S71 78 50 78c-4 0-7.500-.4-11-1.300-3.500 3.500-7 5.300-12 6 2.500-3 3.600-6 3.500-9.500C20 67.500 13 58.500 13 47.500 13 30.500 29 17 50 17z" fill="url(#bub)" />
        </AppTile>
      </Slot>
      <Slot>
        <AppTile id="mail" from="#2f6fe8" to="#59bdf5">
          <rect x="15" y="27" width="70" height="46" rx="5" fill="#e9e9ea" />
          <path d="M17 71 36 51M83 71 64 51" stroke="#8d8d8d" strokeWidth="1.600" />
          <path d="M16 29l27 27.500c4 4 10 4 14 0L84 29z" fill="#f7f7f7" stroke="#8d8d8d" strokeWidth="1.600" />
        </AppTile>
      </Slot>
      <Slot>
        <AppTile id="maps" from="#8fdf80" to="#66cc66">
          <path d="M0 40v60h40V52z" fill="#dc82c4" />
          <path d="M-2 16 100 80v24H60L-2 40z" fill="#f0f1f4" />
          <path d="M53 78 90 104H53z" fill="#f6c744" />
          <rect x="22" y="0" width="31" height="100" fill="#eef0f3" />
          <rect x="27" y="0" width="21" height="60" fill="#2d74ea" />
          <circle cx="92" cy="6" r="28" fill="none" stroke="#d3d5dc" strokeWidth="9" />
          <circle cx="38" cy="62" r="25.500" fill="#f2f4f6" />
          <circle cx="38" cy="62" r="20.500" fill="#2d7bf0" />
          <path d="M38 46l11 28-11-6-11 6z" fill="#f1f3f6" />
        </AppTile>
      </Slot>
      <Slot>
        <AppTile id="photos" from="#ffffff" to="#f7f7f7">
          {petals.map((c, i) => (
            <rect key={c} x="37" y="6.500" width="26" height="41" rx="13" fill={c} opacity=".88" className="mix-blend-multiply" transform={`rotate(${i * 45} 50 50)`} />
          ))}
        </AppTile>
      </Slot>
      <Slot badge="1">
        <AppTile id="ft" from="#84ee7c" to="#56bd47">
          <defs><linearGradient id="cam" x1="0" y1="0" x2="0" y2="1"><stop offset="0" stopColor="#fff" /><stop offset="1" stopColor="#bfe7b8" /></linearGradient></defs>
          <rect x="15" y="28" width="49" height="44" rx="9" fill="url(#cam)" />
          <path d="M67 44 80 33.500c2-1.600 5-.5 5 2.500v31c0 3-3 4-5 2.500L67 58z" fill="url(#cam)" />
        </AppTile>
      </Slot>
      <Slot>
        <AppTile id="cal" from="#ffffff" to="#f1f0ee">
          <rect width="100" height="31" fill="#e5604f" />
          <text x="50" y="24" textAnchor="middle" fontSize="20" fontWeight="600" fill="#fff" fontFamily="Inter, sans-serif">MAG</text>
          <text x="50" y="85" textAnchor="middle" fontSize="62" fontWeight="300" fill="#1f1f1f" fontFamily="Inter, sans-serif" className="tracking-[0px]">3</text>
        </AppTile>
      </Slot>
      <Slot>
        <div className="relative">
          <div className="absolute right-[-5px] top-[12px] h-[64px] w-[20px] rounded-[8px] bg-[linear-gradient(180deg,#c9c3b8_0_30%,#60b8ea_30%_54%,#e8872f_54%_76%,#5fc65a_76%)]" />
          <div className="relative">
            <AppTile id="contacts" from="#b38c55" to="#9a6e42">
              <path d="M7 0v100" stroke="#8a6339" strokeWidth="1.500" />
              <circle cx="52" cy="50" r="31" fill="none" stroke="#86612f" strokeWidth="2" />
              <ellipse cx="52" cy="43" rx="11" ry="12" fill="#8d6736" />
              <path d="M29 70c4-9 13-9.500 23-9.500S71 61 75 70a31 31 0 0 1-46 0z" fill="#8d6736" />
            </AppTile>
          </div>
        </div>
      </Slot>
      <Slot>
        <AppTile id="rem" from="#ffffff" to="#f3f2f0">
          {['#2f78f0', '#e8453a', '#ee9534'].map((c, i) => (
            <g key={c}>
              <circle cx="19.500" cy={25 + i * 25} r="8" fill="none" stroke={c} strokeWidth="1.800" />
              <circle cx="19.500" cy={25 + i * 25} r="5.300" fill={c} />
              <path d={`M38 ${25 + i * 25}h50`} stroke="#a9a9ab" strokeWidth="1.800" strokeLinecap="round" />
            </g>
          ))}
        </AppTile>
      </Slot>
      <Slot>
        <AppTile id="notes" from="#fbfaf8" to="#e9e6e0">
          <rect width="100" height="25" fill="#f8cc4a" />
          <path d="M0 26h100" stroke="#a89a78" strokeWidth="2" />
          <path d="M2 30h98" stroke="#c5c3be" strokeWidth="1.500" strokeDasharray="1.500 2.500" />
          <path d="M0 50h100M0 75h100" stroke="#d3d2cf" strokeWidth="2" />
        </AppTile>
      </Slot>
      <Slot>
        <div className="relative">
          <AppTile id="tv" from="#2c3833" to="#0c1110" />
          <div className="absolute inset-0 flex items-center justify-center pb-[2px] text-white">
            <FaApple className="mb-[3px] h-[33px] w-[27px]" />
            <span className="ml-[3px] text-[36px] font-medium leading-none tracking-[0.02em]">tv</span>
          </div>
        </div>
      </Slot>
      <Slot>
        <AppTile id="music" from="#ec6478" to="#e83a42">
          <path d="M35 29c0-3 1-4.500 4-5.200L69 16.500c2.500-.5 4 .5 4 3V62c0 8-4 13-11 13-5 0-8.500-2.500-8.500-7 0-5 3.500-7.500 8-8.500 5-1 6.500-2 6.500-5V31L40 37v32c0 8-4.500 13.500-11.500 13.500-5 0-9-3-9-7.500s4-7.500 9-8.500 6.500-2 6.500-5z" fill="#fff" />
        </AppTile>
      </Slot>
      <Slot>
        <AppTile id="pod" from="#b865ee" to="#7331b0">
          <g fill="none" stroke="#fff" strokeWidth="4" strokeLinecap="round">
            <path d="M37 77.500a33.500 33.500 0 1 1 26 0" />
            <path d="M37 63.500a21.500 21.500 0 1 1 26 0" />
          </g>
          <circle cx="50" cy="44" r="8" fill="#fff" />
          <path d="M41.500 62c0-5 3.500-6 8.500-6s8.500 1 8.500 6c0 7-1.500 15-2.500 21-.8 3.800-2.500 5.200-6 5.200s-5.200-1.400-6-5.200c-1-6-2.500-14-2.500-21z" fill="#fff" />
        </AppTile>
      </Slot>
      <Slot>
        <AppTile id="as" from="#50b8f0" to="#2560dc">
          <g stroke="#fff" strokeWidth="8" strokeLinecap="round" fill="none">
            <path d="M19 61.500h38M73 61.500h8M44.500 22.500l4 7M56 22 33.500 60M55 40l21 37M28 73.500 25.500 77.500" />
          </g>
        </AppTile>
      </Slot>
      <Slot>
        <AppTile id="set" from="#d6e0e8" to="#8f8b87">
          <circle cx="50" cy="50" r="43" fill="#232425" />
          <circle cx="50" cy="50" r="38.500" fill="none" stroke="#9aa09f" strokeWidth="4.500" pathLength="144" strokeDasharray="1.200 1" />
          <circle cx="50" cy="50" r="33" fill="none" stroke="#9ea3a4" strokeWidth="4.500" />
          <circle cx="50" cy="50" r="21" fill="#5e5f5f" stroke="#858888" strokeWidth="2.500" />
          <circle cx="50" cy="50" r="24.500" fill="none" stroke="#8d9090" strokeWidth="2.500" pathLength="90" strokeDasharray="1.200 1" />
          <path d="M50 50h31M50 50 34.500 23M50 50 34.500 77" stroke="#b0b5b6" strokeWidth="5" />
          <circle cx="50" cy="50" r="3" fill="#4a4a4a" />
          <circle cx="50" cy="50" r="43" fill="none" stroke="#c9cfd3" strokeWidth="1.500" />
        </AppTile>
      </Slot>

      <div className="flex w-[53px] shrink-0 justify-center"><i className="h-[102px] w-[2px] bg-[#333c4a]" /></div>

      <Slot open>
        <div className="relative">
          <AppTile id="disc" from="#7784f2" to="#5462ea" />
          <div className="absolute inset-0 flex items-center justify-center"><FaDiscord className="h-[66px] w-[66px] text-white drop-shadow-[0_4px_3px_rgba(30,30,140,0.5)]" /></div>
        </div>
      </Slot>
      <Slot>
        <svg className="h-[97px] w-[99px] drop-shadow-[0_3px_3px_rgba(0,0,0,0.4)]" viewBox="0 0 100 98">
          <path d="M4 3h56c22 0 37 18 37 44S80 94 56 94H42C18 94 4 76 4 50z" fill="#fdfdfe" stroke="#47618d" strokeWidth="5" strokeLinejoin="round" />
          <path d="M7 8l28 34-26 18z" fill="#ccd9ee" opacity=".8" />
          <path d="M52 48l40-8c2 20-8 40-24 46z" fill="#c3d2ea" opacity=".7" />
          <path d={gearPath(49, 48, 9, 37, 27)} fill="#d8d8dc" stroke="#77798a" strokeWidth="2" strokeLinejoin="round" />
          <circle cx="49" cy="42" r="16" fill="#a9c0e2" stroke="#77798a" strokeWidth="1.800" />
          <path d="M33.500 36C34 24 41 18 50 18.500c10 .5 16.500 8 15.500 17C64.500 45 50 48 50.500 64" fill="none" stroke="#5a5a5a" strokeWidth="5" />
          <path d="M50.500 71v7" stroke="#5a5a5a" strokeWidth="6" />
        </svg>
      </Slot>
      <Slot open>
        <AppTile id="wbx" from="#2b2b2b" to="#050505">
          <defs>
            <linearGradient id="wb1" x1="0" y1="0" x2="1" y2="0"><stop offset="0" stopColor="#58c8f6" /><stop offset=".45" stopColor="#4bb4c0" /><stop offset=".7" stopColor="#4cae60" /><stop offset="1" stopColor="#7ce36c" /></linearGradient>
          </defs>
          <g fill="none" strokeLinecap="round" strokeWidth="15">
            <path d="M85 35C83 55 78 73 66 73" stroke="#1c47c0" />
            <path d="M14 35C16 55 21 74 34 74s15-16 17-27 6-21 16-21c6 0 11 5 13 14" stroke="url(#wb1)" />
            <path d="M23 36c3-7 7-10 12-10 9 0 12 10 15 22s7 25 17 25" stroke="#3168f4" />
          </g>
          <path d="M59 68a9 9 0 0 1 9-9h32v41H59z" fill="#fff" />
          <rect x="68" y="70" width="17" height="19" rx="4" fill="#4ba582" />
          <path d="M85 77l7-4v13l-7-4z" fill="#4ba582" />
        </AppTile>
      </Slot>
      <Slot open>
        <svg className="h-[107px] w-[107px] shrink-0" viewBox="0 0 100 100">
          <circle cx="50" cy="50" r="49.500" fill="#6b6a68" stroke="#757069" strokeWidth="1" />
          <path d="M42 17.500c-18 0-28 13-28 31 0 5 1 9 3 12.500.5-4 .8-7 1.700-11 2 6 4.500 17 6.300 27 .6 3 1.500 4.500 4 4.500h6c2 0 2.500-1 2.500-3.500 0-11 1.500-19 6.500-19s6 8 6 19c0 2.500.8 3.500 3 3.500h5.500c2.500 0 3.300-1.500 3.500-4 .5-9 1-17 3.500-22 3-6 8-4.500 10 0 3 7-.5 14-3 19.500-1 2.500 1.500 4.500 3.500 2.500C84 70 89 58 88.500 50 88 40 84 33 78 26.500c-5 2-12 6-15 8-2 1.500-2 4 0 6.500l4 6.500c-4-3-7-6-8-10.500-.5-2.500 5-5 8-8-6-7.500-15-11.500-25-11.500z" fill="#fff" />
        </svg>
      </Slot>

      <div className="flex w-[53px] shrink-0 justify-center"><i className="h-[102px] w-[2px] bg-[#333c4a]" /></div>

      <Slot>
        <svg className="mr-[4px] h-[101px] w-[78px]" viewBox="0 0 78 101">
          <defs>
            <linearGradient id="bin" x1="0" y1="0" x2="1" y2="0"><stop offset="0" stopColor="#e9ebec" /><stop offset=".3" stopColor="#cfd1d2" /><stop offset=".75" stopColor="#d2d3d4" /><stop offset="1" stopColor="#eceded" /></linearGradient>
          </defs>
          <path d="M5 12 14 4l8 4 6-7 8 5 8-1 5-4 9 7 8-2 7 8-6 12-30 4-28-6z" fill="#e7e7e7" />
          <path d="M14 8l8 3-4 7zM36 6l7 4-6 6zM58 9l6 2-3 8-8-2z" fill="#5b5b5b" />
          <path d="M24 11l10 1-3 6-9 1z" fill="#37c0dc" />
          <path d="M26 17l8 1-4 5z" fill="#53b74a" />
          <path d="M44 10l12 3-5 8-9-1z" fill="#7a4138" />
          <path d="M46 15l6 1-3 5z" fill="#2e5fb8" />
          <path d="M1.500 14C10 24 68 24 76.500 14L68 91c-.8 5.500-6 9-29 9s-28.200-3.500-29-9z" fill="url(#bin)" opacity=".95" />
          <path d="M2 13c2 4 10 8 15 9 14 2 32 2 44-.5 6-1.500 13-4 15-8.500" fill="none" stroke="#f7f7f7" strokeWidth="1.500" />
          <path d="M22 28c12 14 26 10 34-4" fill="none" stroke="#f2f2f2" strokeWidth="4" opacity=".7" />
        </svg>
      </Slot>
    </nav>
  );
}

export default function App() {
  return (
    <main className="relative h-[1800px] w-[2880px] overflow-hidden bg-[#0e141d] font-['Inter',sans-serif] antialiased">
      <div className="absolute left-[864px] top-0 h-[1800px] w-[1152px] bg-[linear-gradient(180deg,#6f86a8_0%,#6f86a8_4%,#0a1522_90%,#0a1522_95%,#0a1420_100%)]" />
      <div className="relative"><MenuBar /></div>
      <WebexWindow />
      <MampWindow />
      <FinderWindow />
      <Dock />
    </main>
  );
}
